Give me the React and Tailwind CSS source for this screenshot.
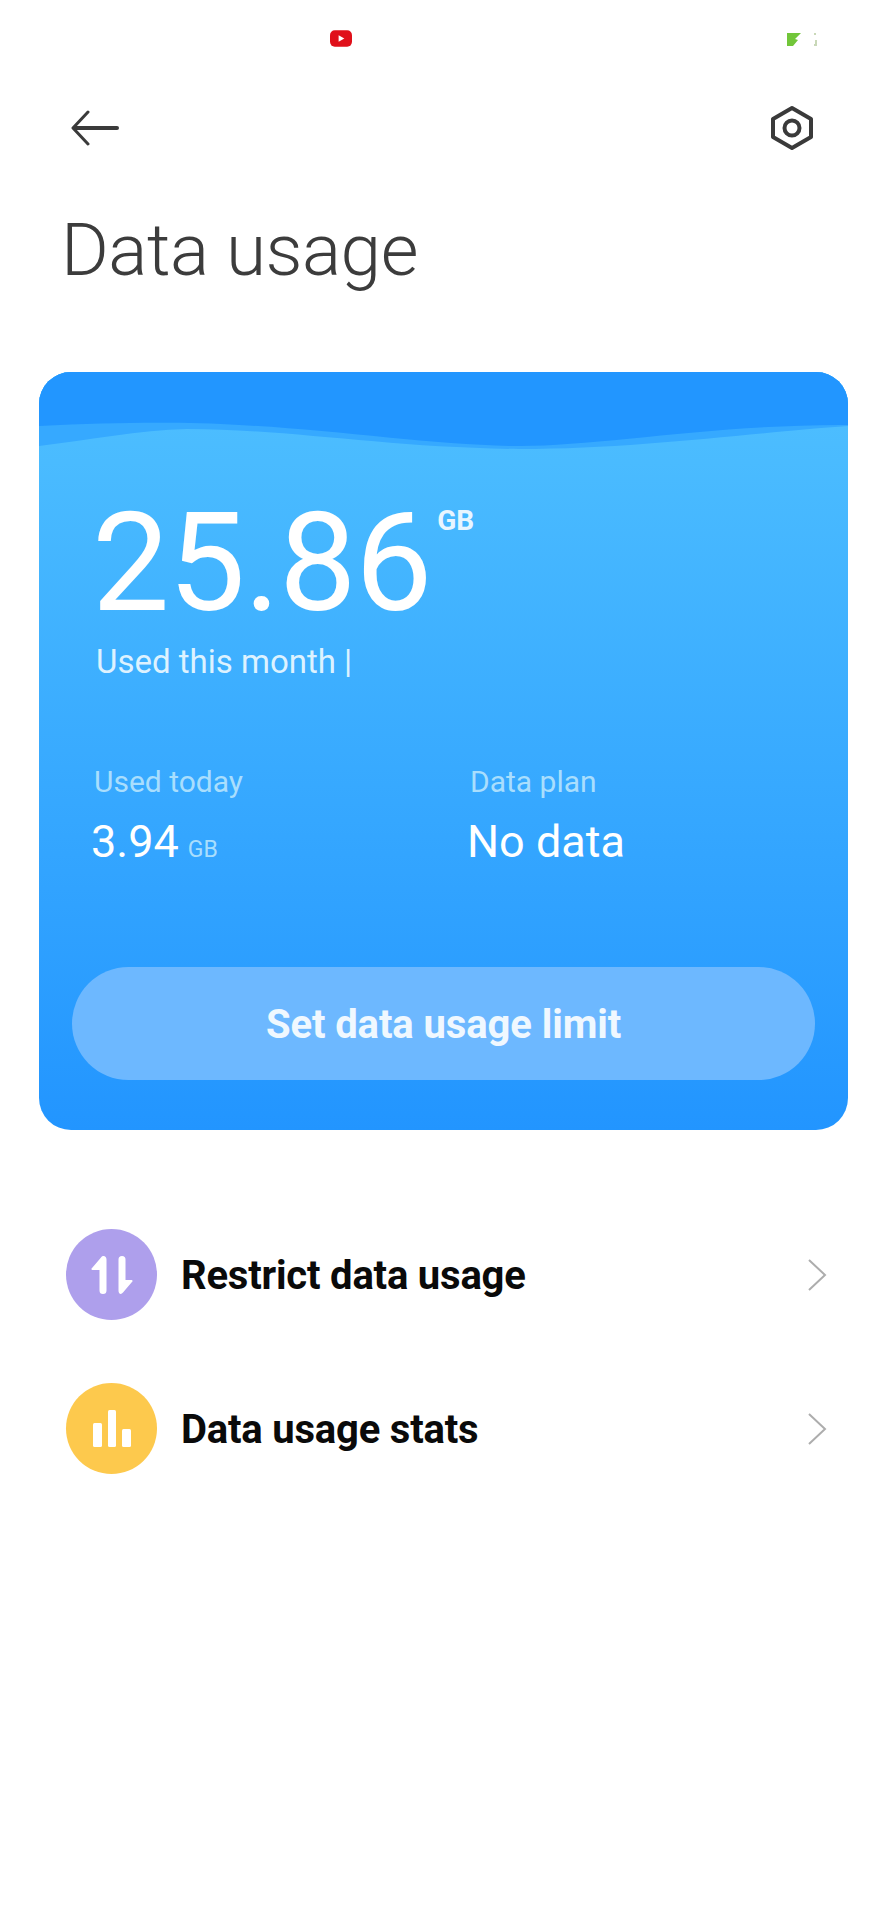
import React from 'react';

function Row({ color, icon, label, className }) {
  return (
    <div className={`flex items-center h-[91px] pl-[66px] pr-[59px] ${className}`}>
      <div className={`w-[91px] h-[91px] rounded-full flex items-center justify-center ${color}`}>{icon}</div>
      <div className="ml-[24px] pt-[3px] flex-1 text-[40px] font-bold text-[#0a0a0a] leading-none tracking-[-0.2px]">{label}</div>
      <svg width="21" height="36" viewBox="0 0 21 36" fill="none" stroke="#adadad" strokeWidth="2">
        <path d="M2 3l16 15L2 33" />
      </svg>
    </div>
  );
}

export default function App() {
  return (
    <div className="relative w-[887px] h-[1920px] bg-white overflow-hidden font-['Roboto',sans-serif]">
      {/* Status bar */}
      <div className="h-[90px] relative">
        <svg className="absolute left-[330px] top-[30px]" width="22" height="17" viewBox="0 0 23 17">
          <rect width="23" height="17" rx="5" fill="#e0101a" />
          <path d="M9 5l6 3.500-6 3.500z" fill="#fff" />
        </svg>
        <svg className="absolute left-[786px] top-[32px]" width="32" height="15" viewBox="0 0 32 15">
          <path d="M1 1h14l-6 6 3 1-5 6H1z" fill="#72c63a" />
          <path d="M28 2h2M29 9h1v4h-2" stroke="#c9d8b8" strokeWidth="2" fill="none" />
        </svg>
      </div>

      {/* Top bar */}
      <div className="flex items-center justify-between pl-[71px] pr-[73px] h-[76px]">
        <svg width="48" height="36" viewBox="0 0 48 36" fill="none" stroke="#3a3a3a" strokeLinecap="round">
          <path d="M46 18H4" strokeWidth="4" />
          <path d="M17 2L2 18l15 16" strokeWidth="3" strokeLinejoin="round" />
        </svg>
        <svg width="44" height="46" viewBox="0 0 44 46" fill="none" stroke="#3a3a3a" strokeWidth="4">
          <path d="M22 3l19 11v18L22 43 3 32V14z" strokeLinejoin="round" />
          <circle cx="22" cy="23" r="7.500" />
        </svg>
      </div>

      <h1 className="ml-[61px] mt-[38px] text-[73px] font-light leading-[92px] text-[#3c3c3c] tracking-[-0.5px]">Data usage</h1>

      {/* Card */}
      <div className="relative mx-[39px] mt-[76px] h-[758px] rounded-[32px] overflow-hidden bg-gradient-to-b from-[#4fc0ff] to-[#2295ff]">
        <svg className="absolute inset-x-0 top-0" width="809" height="80" viewBox="0 0 809 80">
          <path d="M0 0H809V54C720 60 600 77 480 77C350 76 250 57 148 57C100 58 50 68 0 74z" fill="#36a9ff" />
          <path d="M0 0H809V53C680 52 560 74 481 74C400 74 300 58 200 53C150 50 80 50 0 54z" fill="#2296ff" />
        </svg>

        <div className="relative pt-[115px]">
          <div className="flex items-start pl-[53px]">
            <span className="text-[138px] font-normal text-white leading-[152px] tracking-[-1.5px]">25.86</span>
            <span className="ml-[6px] mt-[19px] text-[28px] font-bold text-[#e9f6ff] leading-[30px]">GB</span>
          </div>
          <div className="ml-[57px] mt-[1px] text-[33px] text-[#ddf2ff] leading-[44px]">Used this month |</div>

          <div className="flex mt-[80px]">
            <div className="w-[431px] pl-[55px]">
              <div className="text-[30px] text-[#a9defd] leading-[36px]">Used today</div>
              <div className="mt-[15px] -ml-[3px] flex items-baseline text-white">
                <span className="text-[45px] leading-[54px]">3.94</span>
                <span className="ml-[9px] text-[23px] text-[#a9defd]">GB</span>
              </div>
            </div>
            <div>
              <div className="text-[30px] text-[#a9defd] leading-[36px]">Data plan</div>
              <div className="mt-[15px] -ml-[3px] text-[45px] text-white leading-[54px]">No data</div>
            </div>
          </div>

          <div className="mx-[33px] mt-[98px] h-[113px] pt-[2px] rounded-full bg-[#6db8ff] flex items-center justify-center text-[40px] tracking-[-0.1px] font-bold text-[#f0f8ff]">
            Set data usage limit
          </div>
        </div>
      </div>

      {/* Rows */}
      <Row
        className="mt-[99px]"
        color="bg-[#ae9fec]"
        label="Restrict data usage"
        icon={
          <svg width="42" height="38" viewBox="0 0 42 38" fill="#fff">
            <path d="M15.500 3.500v31a3.500 3.500 0 0 1-7 0V14H2C0 14 0 12.500 1.500 11.500L10 1.500C12-1 15.500 0 15.500 3.500z" />
            <path d="M27.500 3.500a3.500 3.500 0 0 1 7 0V24H40c2 0 2 1.500.5 2.500L32 36.500C30 39 27.500 38 27.500 34.500z" />
          </svg>
        }
      />
      <Row
        className="mt-[63px]"
        color="bg-[#fdc94d]"
        label="Data usage stats"
        icon={
          <svg width="38" height="37" viewBox="0 0 38 37" fill="#fff">
            <rect x="0" y="13" width="9" height="24" rx="1.500" />
            <rect x="15" y="0" width="8" height="37" rx="1.500" />
            <rect x="29" y="19" width="9" height="18" rx="1.500" />
          </svg>
        }
      />
    </div>
  );
}
